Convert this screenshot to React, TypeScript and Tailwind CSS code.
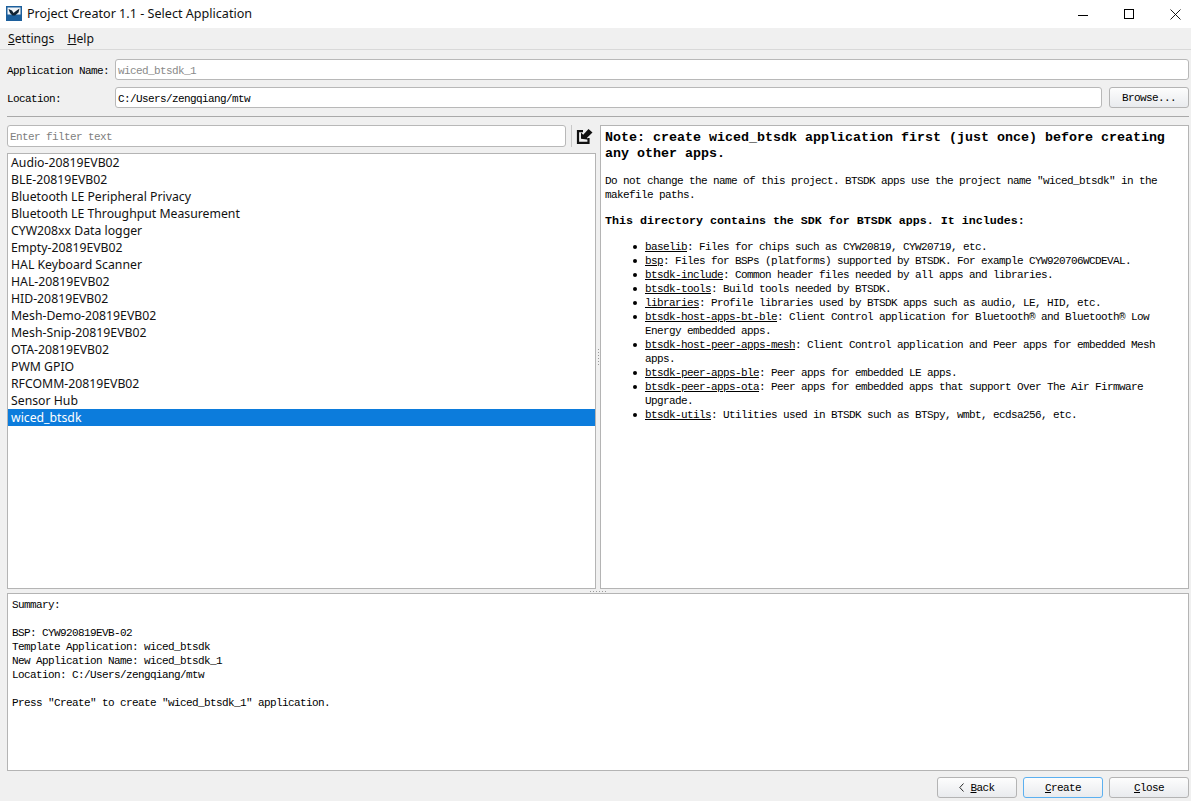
const APPS = [
  "Audio-20819EVB02",
  "BLE-20819EVB02",
  "Bluetooth LE Peripheral Privacy",
  "Bluetooth LE Throughput Measurement",
  "CYW208xx Data logger",
  "Empty-20819EVB02",
  "HAL Keyboard Scanner",
  "HAL-20819EVB02",
  "HID-20819EVB02",
  "Mesh-Demo-20819EVB02",
  "Mesh-Snip-20819EVB02",
  "OTA-20819EVB02",
  "PWM GPIO",
  "RFCOMM-20819EVB02",
  "Sensor Hub",
  "wiced_btsdk",
];

const DOCS = [
  { name: "baselib", lines: ["Files for chips such as CYW20819, CYW20719, etc."] },
  { name: "bsp", lines: ["Files for BSPs (platforms) supported by BTSDK. For example CYW920706WCDEVAL."] },
  { name: "btsdk-include", lines: ["Common header files needed by all apps and libraries."] },
  { name: "btsdk-tools", lines: ["Build tools needed by BTSDK."] },
  { name: "libraries", lines: ["Profile libraries used by BTSDK apps such as audio, LE, HID, etc."] },
  { name: "btsdk-host-apps-bt-ble", lines: ["Client Control application for Bluetooth® and Bluetooth® Low", "Energy embedded apps."] },
  { name: "btsdk-host-peer-apps-mesh", lines: ["Client Control application and Peer apps for embedded Mesh", "apps."] },
  { name: "btsdk-peer-apps-ble", lines: ["Peer apps for embedded LE apps."] },
  { name: "btsdk-peer-apps-ota", lines: ["Peer apps for embedded apps that support Over The Air Firmware", "Upgrade."] },
  { name: "btsdk-utils", lines: ["Utilities used in BTSDK such as BTSpy, wmbt, ecdsa256, etc."] },
];

const mono = "font-['Liberation_Mono',monospace] text-[11px] tracking-[-0.6px] leading-[14px] text-black";

const AppLogo = () => (
  <svg width="16" height="15" viewBox="0 0 16 15">
    <rect width="16" height="15" fill="#1c5f9c" />
    <rect x="1.5" y="1.5" width="13" height="7" fill="#f2f5f8" />
    <path d="M2.5 3 L6 4.5 L7.5 7 L10 5 L13.5 2.5 L12.5 6.5 L9 9.5 L6.5 9.5 L4 7 Z" fill="#0f2233" />
  </svg>
);

const WindowButtons = () => (
  <div className="flex items-center gap-[30px] pr-[8px] h-full">
    <div className="w-[16px] flex justify-center">
      <svg width="10" height="10" viewBox="0 0 10 10"><path d="M0 6.5 H10" stroke="#000" strokeWidth="1" /></svg>
    </div>
    <div className="w-[16px] flex justify-center">
      <svg width="10" height="10" viewBox="0 0 10 10"><rect x="0.5" y="0.5" width="9" height="9" fill="none" stroke="#000" /></svg>
    </div>
    <div className="w-[16px] flex justify-center">
      <svg width="11" height="11" viewBox="0 0 11 11"><path d="M0.5 0.5 L10.5 10.5 M10.5 0.5 L0.5 10.5" stroke="#000" strokeWidth="0.9" /></svg>
    </div>
  </div>
);

// arrow points down-left, into the open corner of the box
const ExportIcon = () => (
  <svg width="18" height="18" viewBox="0 0 18 18">
    <path d="M7 4.2 H2 V15.8 H12.5 V11" fill="none" stroke="#111" strokeWidth="2.2" />
    <path d="M5 11.8 V5.5 L7.2 7.7 L12.5 2 L16.5 5.5 L10.8 11 L12.8 12.8 Z" fill="#111" />
  </svg>
);

const SplitDots = ({ vertical }: { vertical?: boolean }) => (
  <div className={`flex items-center justify-center gap-[2px] ${vertical ? "flex-col w-[4px]" : "h-[4px]"}`}>
    {[0, 1, 2, 3, 4, 5].map((i) => (
      <span key={i} className="w-[1px] h-[1px] bg-[#9a9a9a]" />
    ))}
  </div>
);

const PushButton = ({ children, focused }: { children: React.ReactNode; focused?: boolean }) => (
  <button
    className={`w-[80px] h-[21px] rounded-[3px] border bg-gradient-to-b from-[#fdfdfd] to-[#e9ebee] flex items-center justify-center ${mono} ${
      focused ? "border-[#5cb0f0]" : "border-[#b4b4b4]"
    }`}
  >
    {children}
  </button>
);

export default function App() {
  return (
    <div className="w-[1191px] h-[801px] bg-[#f0f0f0] flex flex-col overflow-hidden">
      {/* title bar */}
      <div className="h-[28px] bg-white flex items-center justify-between pl-[6px] shrink-0">
        <div className="flex items-center gap-[5px]">
          <AppLogo />
          <span className="font-['Noto_Sans',sans-serif] text-[12.6px] text-[#111]">
            Project Creator 1.1 - Select Application
          </span>
        </div>
        <WindowButtons />
      </div>

      {/* menu */}
      <div className="h-[22px] border-b border-[#d9d9d9] flex items-center gap-[13px] pl-[8px] pt-[2px] font-['Noto_Sans',sans-serif] text-[12.2px] text-[#111] shrink-0">
        <span><u>S</u>ettings</span>
        <span><u>H</u>elp</span>
      </div>

      <div className="flex-1 flex flex-col pl-[7px] pr-[2px] min-h-0">
        {/* name row */}
        <div className="flex items-center mt-[9px] h-[21px]">
          <span className={`w-[108px] pt-[2px] ${mono}`}>Application Name:</span>
          <div className={`flex-1 h-[21px] border border-[#b8b8b8] rounded-[3px] bg-white px-[2px] pt-[2px] flex items-center ${mono} !text-[#8a8a8a]`}>
            wiced_btsdk_1
          </div>
        </div>

        {/* location row */}
        <div className="flex items-center mt-[7px] h-[21px]">
          <span className={`w-[108px] pt-[2px] ${mono}`}>Location:</span>
          <div className={`flex-1 h-[21px] border border-[#b8b8b8] rounded-[3px] bg-white px-[2px] pt-[2px] flex items-center ${mono}`}>
            C:/Users/zengqiang/mtw
          </div>
          <div className="ml-[7px]">
            <PushButton>Browse...</PushButton>
          </div>
        </div>

        <div className="h-px bg-[#a9a9a9] mt-[8px] shrink-0" />

        {/* filter + detail */}
        <div className="flex mt-[8px] h-[464px] shrink-0">
          <div className="w-[589px] flex flex-col">
            <div className="flex items-center h-[22px]">
              <div className={`w-[559px] h-[22px] border border-[#b8b8b8] rounded-[3px] bg-white px-[2px] pt-[1px] flex items-center ${mono} !text-[#808080]`}>
                Enter filter text
              </div>
              <div className="ml-[5px] w-px h-[22px] bg-[#c8c8c8]" />
              <div className="ml-[3px] w-[20px] flex justify-center">
                <ExportIcon />
              </div>
            </div>
            <div className="mt-[6px] flex-1 border border-[#b4b4b4] bg-white font-['Noto_Sans',sans-serif] text-[12.25px] text-[#111]">
              {APPS.map((app) => (
                <div
                  key={app}
                  className={`h-[17px] leading-[17px] pl-[3px] ${app === "wiced_btsdk" ? "bg-[#0c7cdc] text-white" : ""}`}
                >
                  {app}
                </div>
              ))}
            </div>
          </div>

          <div className="w-[4px] flex items-center">
            <SplitDots vertical />
          </div>

          <div className="w-[589px] border border-[#b4b4b4] bg-white pl-[4px] pt-[4px]">
            <div className="font-['Liberation_Mono',monospace] font-bold text-[13.33px] leading-[16px] text-black">
              <div>Note: create wiced_btsdk application first (just once) before creating</div>
              <div>any other apps.</div>
            </div>
            <div className={`mt-[12px] ${mono}`}>
              <div>Do not change the name of this project. BTSDK apps use the project name "wiced_btsdk" in the</div>
              <div>makefile paths.</div>
            </div>
            <div className="mt-[12px] font-['Liberation_Mono',monospace] font-bold text-[11.67px] leading-[14px] text-black">
              This directory contains the SDK for BTSDK apps. It includes:
            </div>
            <ul className={`mt-[12px] ml-[40px] ${mono}`}>
              {DOCS.map((doc) => (
                <li key={doc.name} className="relative">
                  <span className="absolute left-[-12px] top-[5px] w-[4px] h-[4px] rounded-full bg-black" />
                  <div>
                    <u>{doc.name}</u>: {doc.lines[0]}
                  </div>
                  {doc.lines[1] && <div>{doc.lines[1]}</div>}
                </li>
              ))}
            </ul>
          </div>
        </div>

        <SplitDots />

        {/* summary */}
        <div className={`h-[178px] shrink-0 border border-[#b4b4b4] bg-white pl-[4px] pt-[4px] ${mono}`}>
          <div>Summary:</div>
          <div className="h-[14px]" />
          <div>BSP: CYW920819EVB-02</div>
          <div>Template Application: wiced_btsdk</div>
          <div>New Application Name: wiced_btsdk_1</div>
          <div>Location: C:/Users/zengqiang/mtw</div>
          <div className="h-[14px]" />
          <div>Press "Create" to create "wiced_btsdk_1" application.</div>
        </div>

        {/* footer buttons */}
        <div className="flex justify-end gap-[6px] mt-[6px]">
          <PushButton>
            <svg className="mr-[6px]" width="5" height="9" viewBox="0 0 5 9"><path d="M4.5 0.5 L0.8 4.5 L4.5 8.5" fill="none" stroke="#111" strokeWidth="0.9" /></svg>
            <span><u>B</u>ack</span>
          </PushButton>
          <PushButton focused><span><u>C</u>reate</span></PushButton>
          <PushButton><span><u>C</u>lose</span></PushButton>
        </div>
      </div>
    </div>
  );
}
